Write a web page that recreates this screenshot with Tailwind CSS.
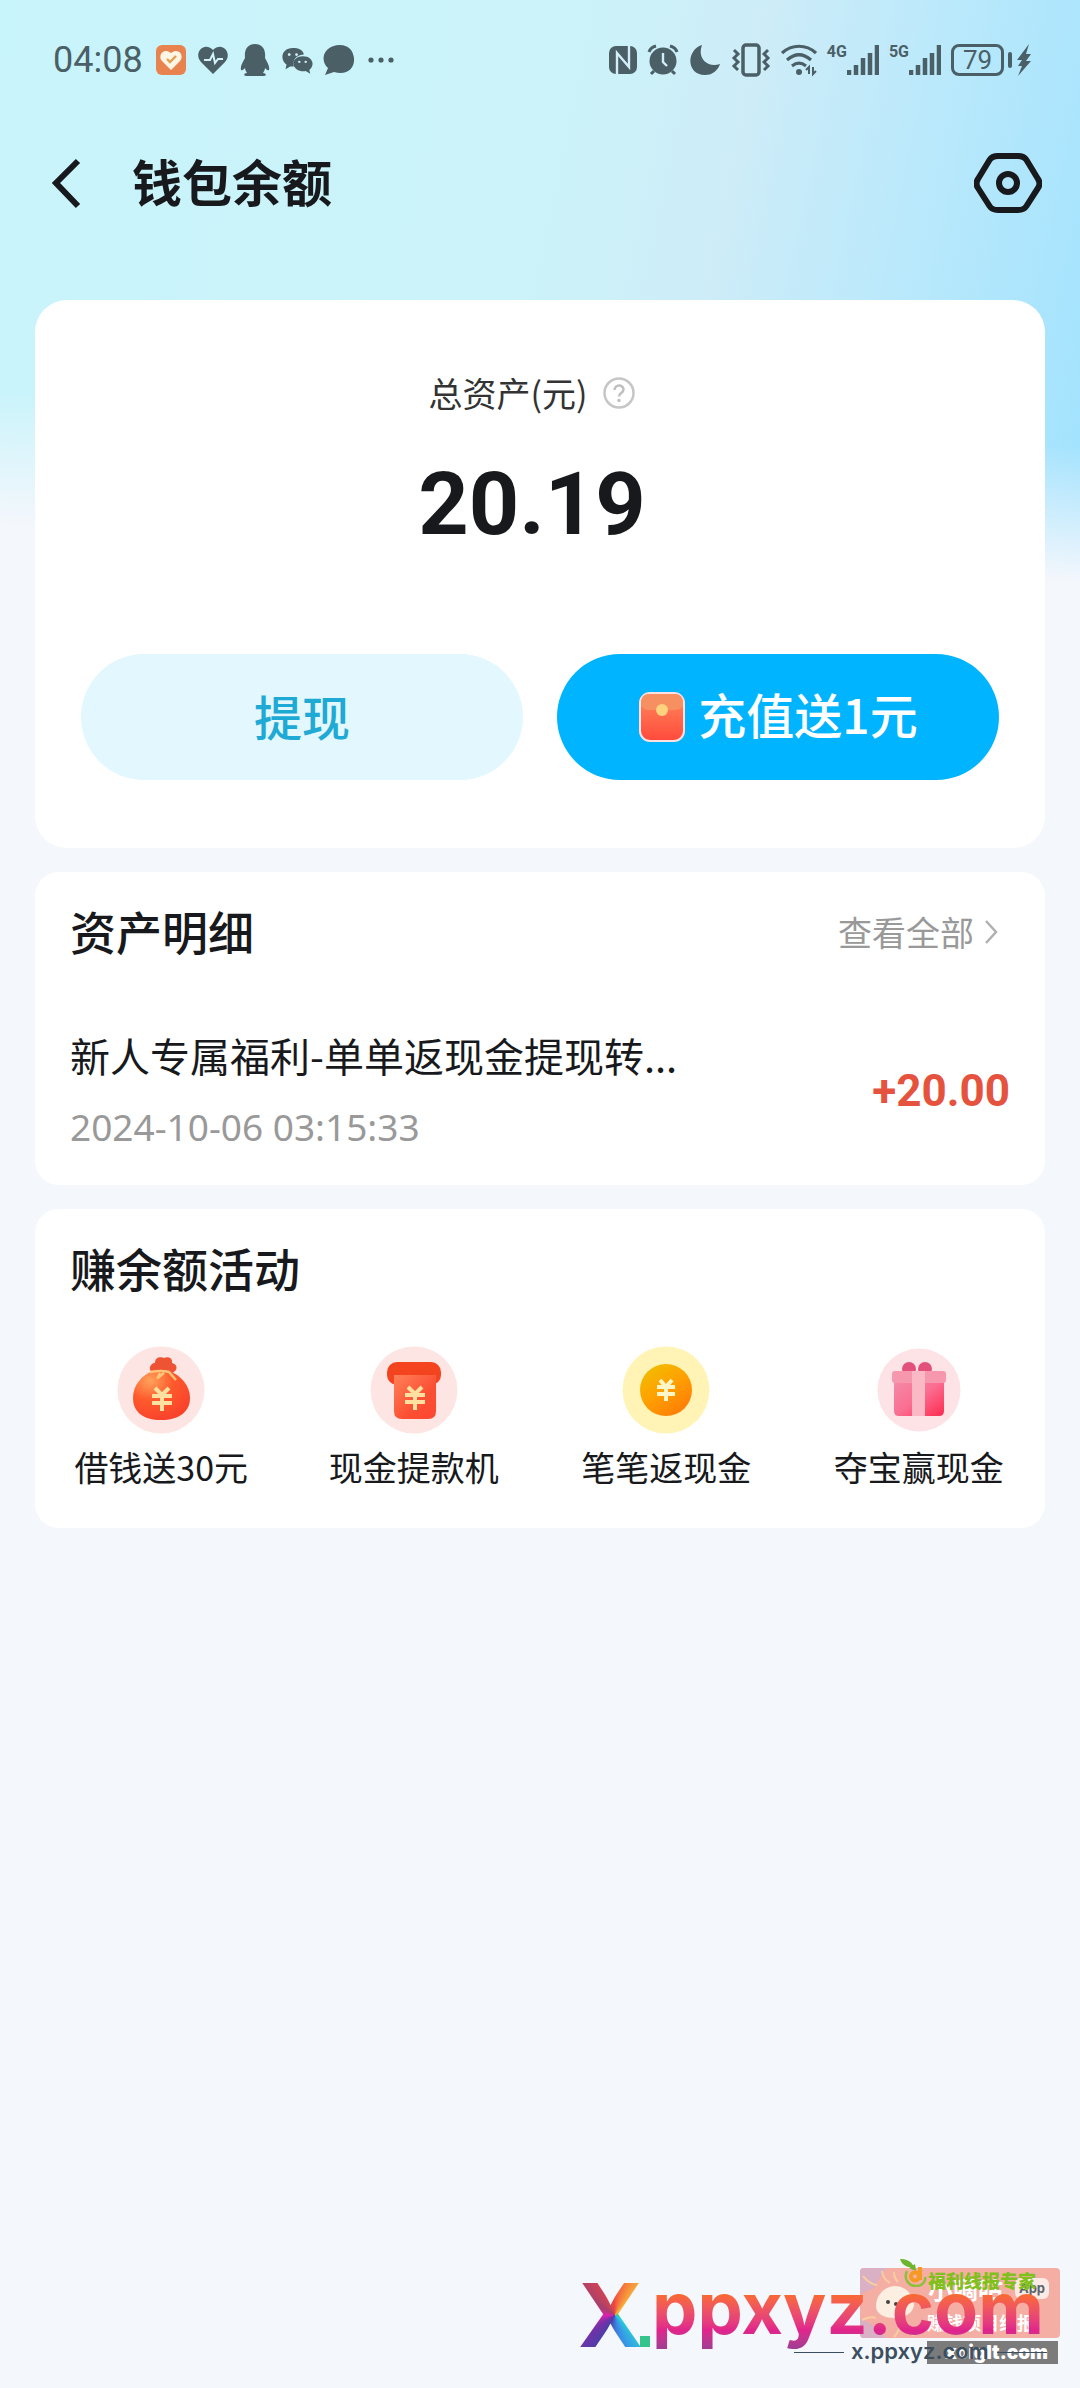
<!DOCTYPE html>
<html lang="zh-CN">
<head>
<meta charset="utf-8">
<meta name="viewport" content="width=device-width, initial-scale=1">
<title>钱包余额</title>
<script src="https://cdn.jsdelivr.net/npm/@tailwindcss/browser@4"></script>
</head>
<body class="relative min-h-screen bg-[#f4f7fc] font-['Noto_Sans_CJK_SC',sans-serif] text-[#17191c]">

<!-- soft sky gradient behind the header -->
<div class="absolute inset-x-0 top-0 h-[620px] bg-[linear-gradient(102deg,#c8f4fb_0%,#ccf3f9_48%,#cdecf8_64%,#bbe9fb_78%,#a0e2fe_100%)]" aria-hidden="true">
  <div class="h-full bg-[linear-gradient(183deg,transparent_66%,#f4f7fc_86%)]"></div>
</div>

<div class="relative">
  <!-- status bar -->
  <div class="flex h-[120px] items-center justify-between pl-[53px] pr-12 text-[#4a5f66]">
    <div class="flex items-center gap-[10px]">
      <span class="pr-[2px] font-[Roboto,sans-serif] text-[36px] leading-none">04:08</span>
      <svg class="h-8 w-8" viewBox="0 0 32 32"><rect x="1" y="1" width="30" height="30" rx="6" fill="#e8824f"/><path d="M16 26 7 17C2 11 9 3 16 9c7-6 14 2 9 8Z" fill="#fff5e4"/><path d="m12 15 3 3 6-6" fill="none" stroke="#e0a050" stroke-width="2.4"/></svg>
      <svg class="h-8 w-8" viewBox="0 0 32 32"><path d="M16 30 4 18C-4 9 7-3 16 6c9-9 20 3 12 12Z" fill="currentColor"/><path d="M7 16h6l3-6 2 9 3-4h5" fill="none" stroke="#d5f4fa" stroke-width="2"/></svg>
      <svg class="h-9 w-8" viewBox="0 0 32 36"><path d="M16 2c-7 0-11 5-10 14-2 4-5 8-4 12 1 1 3-1 4-2 0 2 1 3 2 5-3 0-4 3-1 3h18c3 0 2-3-1-3 1-2 2-3 2-5 1 1 3 3 4 2 1-4-2-8-4-12 1-9-3-14-10-14Z" fill="currentColor"/></svg>
      <svg class="h-8 w-8" viewBox="0 0 35 32"><path d="M13 3C1 3-2 15 6 21l-1 5 5-3h4c-2-8 4-13 11-13-1-5-6-7-12-7Z" fill="currentColor"/><path d="M24 12c-10 0-14 9-7 14 3 2 7 3 10 2l5 3-1-4c7-6 3-15-7-15Z" fill="currentColor"/><g fill="#d5f4fa"><circle cx="9" cy="10" r="1.5"/><circle cx="17" cy="10" r="1.5"/><circle cx="20" cy="18" r="1.3"/><circle cx="27" cy="18" r="1.3"/></g></svg>
      <svg class="h-8 w-8" viewBox="0 0 32 32"><path d="M17 1C1 1-4 16 5 24L2 31l9-3c13 4 21-4 20-14C30 6 25 1 17 1Z" fill="currentColor"/></svg>
      <svg class="h-8 w-8" viewBox="0 0 32 32"><g fill="currentColor"><circle cx="6" cy="16" r="2.6"/><circle cx="16" cy="16" r="2.6"/><circle cx="26" cy="16" r="2.6"/></g></svg>
    </div>
    <div class="flex items-center gap-[10px]">
      <svg class="h-7 w-7" viewBox="0 0 28 28"><rect width="28" height="28" rx="7" fill="currentColor"/><path d="M8 28V7l12 14V0M8 7v14M20 20V7" fill="none" stroke="#d3eef8" stroke-width="2.4"/></svg>
      <svg class="h-8 w-8" viewBox="0 0 32 32"><circle cx="16" cy="17" r="13.500" fill="currentColor"/><path d="M2 8c1-3 3-5 7-6M30 8c-1-3-3-5-7-6M7 27l-3 3M25 27l3 3" stroke="currentColor" stroke-width="3" fill="none"/><path d="M16 9v9l4 4" stroke="#d0edf9" stroke-width="2.4" fill="none"/></svg>
      <svg class="h-8 w-8" viewBox="0 0 32 32"><path d="M13 1C-3 6-3 31 16 31c8 0 13-5 15-11C18 24 8 14 13 1Z" fill="currentColor"/></svg>
      <svg class="h-9 w-10" viewBox="0 0 40 36"><rect x="12" y="3" width="16" height="30" rx="3" fill="none" stroke="currentColor" stroke-width="3.500"/><path d="m3 8 4 4-4 4 4 4-4 4 4 4M37 8l-4 4 4 4-4 4 4 4-4 4" fill="none" stroke="currentColor" stroke-width="3"/></svg>
      <svg class="h-9 w-9" viewBox="0 0 36 36"><path d="M1 11c10-9 24-9 34 0M6 18c8-7 16-7 24 0M11 24c5-4 9-4 14 0" fill="none" stroke="currentColor" stroke-width="3.200"/><circle cx="18" cy="30" r="3" fill="currentColor"/><path d="M28 32v-7l-3 3M32 25v7l3-3" fill="none" stroke="currentColor" stroke-width="2"/></svg>
      <div class="flex"><span class="font-[Roboto,sans-serif] text-base font-bold leading-none">4G</span><svg class="h-8 w-8" viewBox="0 0 32 32"><path d="M2 26v5M9 21v10M16 14v17M23 9v22M30 1v30" stroke="currentColor" stroke-width="4.500"/></svg></div>
      <div class="flex"><span class="font-[Roboto,sans-serif] text-base font-bold leading-none">5G</span><svg class="h-8 w-8" viewBox="0 0 32 32"><path d="M2 26v5M9 21v10M16 14v17M23 9v22M30 1v30" stroke="currentColor" stroke-width="4.500"/></svg></div>
      <div class="flex items-center gap-1">
        <span class="flex h-8 w-[53px] items-center justify-center rounded-lg border-[3px] border-current font-[Roboto,sans-serif] text-[26px] leading-none">79</span>
        <span class="h-4 w-1 rounded bg-current"></span>
        <svg class="h-9 w-4" viewBox="0 0 16 36"><path d="M13 2 1 18h5l-4 6h4L2 34l13-15h-5l5-7h-5Z" fill="currentColor"/></svg>
      </div>
    </div>
  </div>

  <!-- title bar -->
  <header class="flex h-[180px] items-start justify-between pl-12 pr-[38px] pt-8">
    <div class="flex h-16 items-center gap-12">
      <button class="h-14 w-9" aria-label="返回"><svg class="h-14 w-9" viewBox="0 0 36 56"><path d="M30 5 8 27l22 23" fill="none" stroke="currentColor" stroke-width="6"/></svg></button>
      <h1 class="pb-2 text-[50px] font-bold leading-none">钱包余额</h1>
    </div>
    <button class="h-16 w-[68px]" aria-label="设置"><svg class="h-16 w-[68px]" viewBox="0 0 68 64"><path d="M24 4h20q6 0 8.500 4L64 27q3 4.500 0 9L52.500 54q-2.500 4-8.500 4H24q-6 0-8.500-4L4 36q-3-4.500 0-9L15.500 8q2.500-4 8.500-4Z" fill="none" stroke="currentColor" stroke-width="6"/><circle cx="34" cy="31" r="9" fill="none" stroke="currentColor" stroke-width="6"/></svg></button>
  </header>

  <main class="flex flex-col gap-6 px-[35px]">
    <!-- balance -->
    <section class="rounded-[32px] bg-white px-[46px] pb-[68px] pt-[70px]">
      <div class="pr-4">
        <div class="flex items-center justify-center gap-4 text-[#333]">
          <h2 class="text-[34px] leading-[46px]">总资产(元)</h2>
          <svg class="h-8 w-8" viewBox="0 0 32 32" role="img" aria-label="说明"><circle cx="16" cy="16" r="14.500" fill="none" stroke="#c6c6c6" stroke-width="2.500"/><path d="M11.500 13c0-6 9-6 9-.5 0 3.500-4.500 3.500-4.500 7" fill="none" stroke="#c0c0c0" stroke-width="2.500"/><circle cx="16" cy="23.500" r="1.700" fill="#c0c0c0"/></svg>
        </div>
        <p class="mt-10 text-center font-[Roboto,sans-serif] text-[88px] font-bold leading-[96px]">20.19</p>
      </div>
      <div class="mt-[102px] grid grid-cols-2 gap-[34px]">
        <button class="h-[126px] rounded-full bg-[#e2f7fe] pb-1 text-5xl font-medium text-[#1eaad4]">提现</button>
        <button class="flex h-[126px] items-center justify-center gap-3 rounded-full bg-[#00b4ff] text-5xl font-medium text-white">
          <svg class="h-[50px] w-12" viewBox="0 0 48 50"><defs><linearGradient id="env" x2="0" y2="1"><stop stop-color="#ff8a5c"/><stop offset="1" stop-color="#ff4a3c"/></linearGradient></defs><rect x="2" y="1" width="44" height="48" rx="10" fill="url(#env)" stroke="#ffe0e0" stroke-width="2"/><path d="M3 14q3 4 8 4h26q5 0 8-4v-3q0-9-8-9H11q-8 0-8 9Z" fill="#f79060"/><circle cx="24" cy="18" r="6" fill="#ffd27d"/></svg>
          <span class="pb-2">充值送1元</span>
        </button>
      </div>
    </section>

    <!-- transactions -->
    <section class="rounded-3xl bg-white px-[35px] pb-8 pt-[29px]">
      <div class="flex items-center justify-between">
        <h2 class="text-[46px] font-medium leading-[58px]">资产明细</h2>
        <a href="#" class="flex items-center gap-2 pr-2 pt-1 text-[34px] leading-[44px] text-[#999]">查看全部<svg class="h-8 w-5" viewBox="0 0 20 32"><path d="m4 5 10 11L4 27" fill="none" stroke="#b0b0b0" stroke-width="2.500"/></svg></a>
      </div>
      <div class="mt-[66px] flex items-center justify-between">
        <div>
          <p class="text-[40px] leading-[60px]">新人专属福利-单单返现金提现转...</p>
          <p class="mt-4 font-['Noto_Sans',sans-serif] text-[37px] leading-[52px] text-[#999]">2024-10-06 03:15:33</p>
        </div>
        <p class="pt-1 font-[Roboto,sans-serif] text-[44px] font-bold leading-[52px] text-[#e5533f]">+20.00</p>
      </div>
    </section>

    <!-- activities -->
    <section class="rounded-3xl bg-white pb-9 pt-[29px]">
      <h2 class="px-[35px] text-[46px] font-medium leading-[58px]">赚余额活动</h2>
      <div class="mt-[50px] grid grid-cols-4 text-[34px] leading-[50px]">
        <a href="#" class="flex flex-col items-center gap-2">
          <svg class="h-[88px] w-[88px]" viewBox="0 0 88 88"><defs><radialGradient id="bag" cx=".3" cy=".2" r=".8"><stop stop-color="#ffa25c"/><stop offset=".5" stop-color="#ff5a2c"/><stop offset="1" stop-color="#f9442c"/></radialGradient></defs><circle cx="44" cy="44" r="43.500" fill="#fde5e3"/><path d="M37 27c-7-2-4-10 1-10 0-7 7-6 9-5 4-2 9 0 8 5 6 1 6 8 0 10Z" fill="#ee5433"/><path d="M36 25h16c12 4 21 15 21 27 0 14-11 22-29 22S16 66 16 52c0-13 9-23 20-27Z" fill="url(#bag)"/><path d="M33 26q12-2 19 0l7 8M43 27q-4 7-1 4l5-4" fill="none" stroke="#ffc478" stroke-width="2.500"/><path d="m38 42 7 7 7-7M35 50h20M35 57h20M45 49v16" fill="none" stroke="#ffe0a0" stroke-width="4"/></svg>
          借钱送30元
        </a>
        <a href="#" class="flex flex-col items-center gap-2">
          <svg class="h-[88px] w-[88px]" viewBox="0 0 88 88"><defs><linearGradient id="atm" x2="1" y2="1"><stop stop-color="#ff8157"/><stop offset=".6" stop-color="#fb5034"/><stop offset="1" stop-color="#fd4630"/></linearGradient></defs><circle cx="44" cy="44" r="43.500" fill="#fde5e3"/><rect x="17" y="16" width="54" height="23" rx="10" fill="#f4431f"/><path d="M24 29h42v36q0 8-8 8H32q-8 0-8-8Z" fill="url(#atm)"/><path d="m38 41 7 7 7-7M35 49h20M35 56h20M45 48v16" fill="none" stroke="#ffe0a0" stroke-width="4"/></svg>
          现金提款机
        </a>
        <a href="#" class="flex flex-col items-center gap-2">
          <svg class="h-[88px] w-[88px]" viewBox="0 0 88 88"><defs><linearGradient id="coin" x1=".1" x2=".8" y2="1"><stop stop-color="#f0c000"/><stop offset=".5" stop-color="#ffa000"/><stop offset="1" stop-color="#ff7a08"/></linearGradient></defs><circle cx="44" cy="44" r="43.500" fill="#fff4b6"/><circle cx="44" cy="44" r="26" fill="url(#coin)"/><path d="m38 34 6 7 6-7M35 41h18M35 48h18M44 41v14" fill="none" stroke="#fff6c8" stroke-width="4"/></svg>
          笔笔返现金
        </a>
        <a href="#" class="flex flex-col items-center gap-2">
          <svg class="h-[88px] w-[88px]" viewBox="0 0 88 88"><defs><linearGradient id="gift" x2="1" y2="1"><stop stop-color="#f48caa"/><stop offset=".5" stop-color="#fa6f92"/><stop offset="1" stop-color="#ff2a50"/></linearGradient></defs><circle cx="44" cy="44" r="41.500" fill="#fde2e6"/><circle cx="34" cy="23" r="7" fill="#e2507c"/><circle cx="50" cy="23" r="7" fill="#e2507c"/><path d="M19 32h50v33q0 5-5 5H24q-5 0-5-5Z" fill="url(#gift)"/><rect x="17" y="25" width="54" height="12" rx="3" fill="#f797ae"/><path d="M37 25h13v45H37Z" fill="#fbb9c6"/></svg>
          夺宝赢现金
        </a>
      </div>
    </section>
  </main>
</div>

<!-- stacked site watermarks in the bottom corner -->
<aside class="pointer-events-none absolute bottom-0 right-0 h-[158px] w-[520px] overflow-hidden font-[Inter,'Noto_Sans_CJK_SC',sans-serif] leading-none">
  <svg class="absolute left-[300px] top-[38px] h-[70px] w-[200px]" viewBox="0 0 200 70"><rect width="200" height="70" rx="4" fill="#f5aea4"/><path d="M0 4q0-4 4-4h22L14 20 0 26ZM0 50l14 8 12 12H4q-4 0-4-4Z" fill="#d9b0c4"/><path d="M3 8q6 8 14 9M22 3q1 8 8 12M34 4q0 6 4 10M2 52q8-4 14-2M40 56q-1 8-6 13M46 56q2 6 8 12" fill="none" stroke="#f9cfa0" stroke-width="2"/><path d="M16 38c0-12 10-20 19-20 10 0 18 8 19 18 0 9-10 14-20 14S16 46 16 38Z" fill="#fdeee2"/><circle cx="28" cy="34" r="2" fill="#444"/><circle cx="36" cy="36" r="2" fill="#444"/></svg>
  <span class="absolute left-[368px] top-[48px] text-[25px] font-bold text-white">小嘀咕</span>
  <span class="absolute left-[455px] top-[48px] flex h-[21px] w-[34px] items-center justify-center rounded-md bg-[#fdeae4] text-[13px] font-bold text-[#5c6670]">App</span>
  <span class="absolute left-[367px] top-[80px] text-lg font-bold text-white">赚钱项目线报</span>
  <span class="absolute left-[13px] top-[26px] bg-[conic-gradient(from_0deg_at_60%_50%,#f4503c,#f6b53c_12%,#40c870_25%,#28d0d8_36%,#3a8ce8_46%,#4a3fa8_58%,#7a2fa8_66%,#e020b0_74%,#a8406c_84%,#f04840)] bg-clip-text pl-[5px] text-[88px] font-bold leading-[118px] text-transparent">X</span>
  <span class="absolute left-[80px] top-[106px] h-[11px] w-[10px] bg-[#35c48c]"></span>
  <span class="absolute left-[92px] top-[33px] bg-linear-to-b from-[#fb6d1c] from-32% via-[#e0248c] via-75% to-[#a03c92] to-95% bg-clip-text text-[72px] font-bold leading-[90px] text-transparent">ppxyz.com</span>
  <svg class="absolute left-[340px] top-[29px] h-7 w-7" viewBox="0 0 28 28"><path d="M14 8C11 1 5 0 0 0c2 6 7 9 14 8ZM9 9l7 3-1-7Z" fill="#6db52c"/><path d="M7 12c-4 8 2 15 9 15s10-5 9-9" fill="none" stroke="#8cc03a" stroke-width="2.500"/><path d="M20 8v13M19 17a4 4 0 1 0-8 1 4 4 0 0 0 8-1Z" fill="none" stroke="#f59a23" stroke-width="4"/></svg>
  <span class="absolute left-[368px] top-[38px] text-lg font-black text-[#80c01c]">福利线报专家</span>
  <span class="absolute left-[234px] top-[122px] h-px w-[50px] bg-[#3d4f5f]"></span>
  <span class="absolute left-[367px] top-[111px] h-[23px] w-[131px] bg-[#7b7b7b] pr-[10px] text-right text-[19px] font-black leading-[23px] text-white">xoiglt.com</span>
  <span class="absolute left-[291px] top-[110px] text-[22px] font-semibold text-[#3d4f5f]">x.ppxyz.com</span>
  <span class="absolute left-[437px] top-[122px] h-px w-[50px] bg-[#3d4f5f]"></span>
</aside>

</body>
</html>
